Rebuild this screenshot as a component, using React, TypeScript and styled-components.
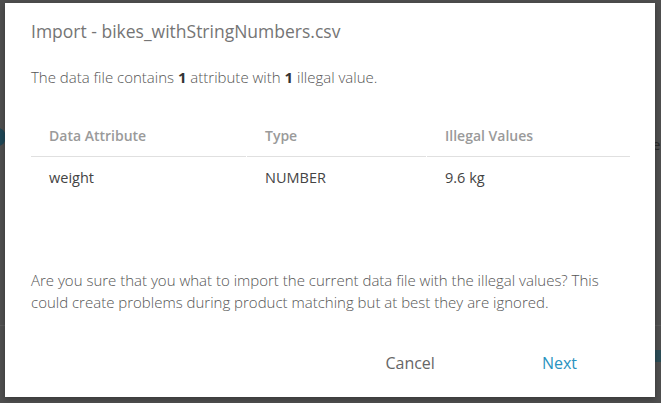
import React from "react";
import styled, { createGlobalStyle } from "styled-components";

const Global = createGlobalStyle`
  html, body { margin: 0; padding: 0; }
  body {
    background: #4f4f4f;
    font-family: "Open Sans", "Liberation Sans", sans-serif;
    width: 661px;
    height: 403px;
    overflow: hidden;
  }
`;

const Backdrop = styled.div`
  position: relative;
  width: 661px;
  height: 403px;
  padding: 3px 6px 6px 5px;
  box-sizing: border-box;
`;

const PageLine = styled.div`
  position: absolute;
  left: 0;
  right: 0;
  top: 325px;
  height: 1px;
  background: #5a5a5a;
`;

const Avatar = styled.div`
  position: absolute;
  left: -10px;
  top: 128px;
  width: 16px;
  height: 18px;
  border-radius: 50%;
  background: #1f4756;
`;

const SideBlock = styled.div`
  position: absolute;
  right: 0;
  top: 350px;
  width: 10px;
  height: 12px;
  background: #2c4d57;
`;

const SideText = styled.span`
  position: absolute;
  left: 652px;
  top: 134px;
  font-size: 15px;
  color: #2a2a2a;
  line-height: 20px;
`;

const Dialog = styled.div`
  position: relative;
  background: #ffffff;
  height: 394px;
  box-sizing: border-box;
  padding: 16px 26px 0 26px;
  display: flex;
  flex-direction: column;
  box-shadow: 0 2px 6px rgba(0, 0, 0, 0.3);
`;

const Title = styled.h2`
  margin: 0;
  font-size: 17.5px;
  font-weight: 400;
  color: #757575;
  line-height: 24px;
`;

const Paragraph = styled.p<{ $top: number }>`
  margin: ${(p) => p.$top}px 0 0 0;
  font-size: 15px;
  font-weight: 300;
  color: #555555;
  line-height: 22px;
  max-width: 592px;
`;

const Strong = styled.b`
  font-weight: 700;
  color: #333;
`;

const Table = styled.div`
  margin-top: 26px;
  display: grid;
  grid-template-columns: 216px 180px 204px;
  width: 600px;
`;

const HeadCell = styled.div`
  padding: 0 18px;
  height: 42px;
  display: flex;
  align-items: center;
  font-size: 14px;
  font-weight: 600;
  color: #9a9a9a;
  border-bottom: 1px solid #e0e0e0;
  margin-right: 1px;
`;

const Cell = styled.div`
  padding: 0 18px;
  height: 40px;
  display: flex;
  align-items: center;
  font-size: 14.5px;
  font-weight: 400;
  color: #444444;
`;

const Spacer = styled.div`
  flex: 1;
`;

const Footer = styled.div`
  display: flex;
  justify-content: flex-end;
  align-items: flex-start;
  height: 84px;
  box-sizing: border-box;
  padding: 39px 52px 0 0;
  gap: 107px;
`;

const Button = styled.button<{ $primary?: boolean }>`
  background: none;
  border: none;
  font-family: "Open Sans", "Liberation Sans", sans-serif;
  font-size: 16px;
  line-height: 22px;
  font-weight: 400;
  color: ${(p) => (p.$primary ? "#2a93c0" : "#666666")};
  padding: 0;
  cursor: pointer;
`;

export default function App() {
  return (
    <>
      <Global />
      <Backdrop>
        <PageLine />
        <Avatar />
        <SideBlock />
        <SideText>er</SideText>
        <Dialog>
          <Title>Import - bikes_withStringNumbers.csv</Title>
          <Paragraph $top={23}>
            The data file contains <Strong>1</Strong> attribute with <Strong>1</Strong> illegal value.
          </Paragraph>
          <Table>
            <HeadCell>Data Attribute</HeadCell>
            <HeadCell>Type</HeadCell>
            <HeadCell>Illegal Values</HeadCell>
            <Cell>weight</Cell>
            <Cell>NUMBER</Cell>
            <Cell>9.6 kg</Cell>
          </Table>
          <Spacer />
          <Paragraph $top={0}>
            Are you sure that you what to import the current data file with the illegal values? This
            could create problems during product matching but at best they are ignored.
          </Paragraph>
          <Footer>
            <Button>Cancel</Button>
            <Button $primary>Next</Button>
          </Footer>
        </Dialog>
      </Backdrop>
    </>
  );
}
